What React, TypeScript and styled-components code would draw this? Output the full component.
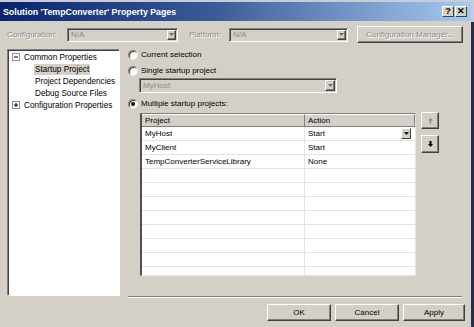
import { Fragment } from "react";
import styled, { createGlobalStyle } from "styled-components";

const GlobalStyle = createGlobalStyle`
  html, body {
    margin: 0;
    padding: 0;
    background: #22304c;
  }
  body {
    font-family: "Liberation Sans", Arial, sans-serif;
    font-size: 8px;
    color: #000;
  }
  * {
    box-sizing: border-box;
  }
`;

const Screen = styled.div`
  width: 474px;
  height: 327px;
  display: flex;
  overflow: hidden;
`;

const Backdrop = styled.div`
  width: 3px;
  background: linear-gradient(to bottom, #c8ccd8 22px, #22304c 22px);
`;

const Window = styled.div`
  width: 471px;
  height: 327px;
  background: #d4d0c8;
  border-top: 2px solid #c8ccd8;
  display: flex;
  flex-direction: column;
`;

const TitleBar = styled.div`
  height: 19px;
  display: flex;
  align-items: center;
  padding: 0 4px 0 3px;
  background: linear-gradient(to right, #0a246a, #3a5a98 45%, #a6caf0);
  color: #fff;
  font-weight: bold;
  font-size: 8.8px;
`;

const TitleText = styled.div`
  flex: 1;
`;

const CaptionButton = styled.div`
  width: 12px;
  height: 11px;
  margin-left: 1px;
  background: #d4d0c8;
  border: 1px solid;
  border-color: #fff #404040 #404040 #fff;
  color: #000;
  font-size: 9px;
  font-weight: bold;
  display: flex;
  align-items: center;
  justify-content: center;
  line-height: 1;
`;

const ConfigRow = styled.div`
  display: flex;
  align-items: center;
  height: 17px;
  margin-top: 5px;
  padding-left: 7px;
`;

const DisabledLabel = styled.div<{ $width: number; $gap?: number }>`
  width: ${({ $width }) => $width}px;
  margin-left: ${({ $gap = 0 }) => $gap}px;
  color: #8c8c8c;
  text-shadow: 1px 1px 0 #fff;
`;

const Combo = styled.div<{ $width: number; $height?: number }>`
  width: ${({ $width }) => $width}px;
  height: ${({ $height = 14 }) => $height}px;
  display: flex;
  align-items: stretch;
  background: #d4d0c8;
  border: 1px solid;
  border-color: #808080 #fff #fff #808080;
  box-shadow: inset 1px 1px 0 #404040;
  padding: 1px;
`;

const ComboText = styled.div`
  flex: 1;
  padding-left: 2px;
  display: flex;
  align-items: center;
  color: #8c8c8c;
`;

const ArrowButton = styled.div<{ $width?: number }>`
  width: ${({ $width = 9 }) => $width}px;
  background: #d4d0c8;
  border: 1px solid;
  border-color: #fff #404040 #404040 #fff;
  box-shadow: inset -1px -1px 0 #808080;
  display: flex;
  align-items: center;
  justify-content: center;
`;

const PushButton = styled.div<{ $width: number; $height?: number; $disabled?: boolean; $gap?: number }>`
  width: ${({ $width }) => $width}px;
  height: ${({ $height = 17 }) => $height}px;
  margin-left: ${({ $gap = 0 }) => $gap}px;
  background: #d4d0c8;
  border: 1px solid;
  border-color: #fff #404040 #404040 #fff;
  box-shadow: inset -1px -1px 0 #808080;
  display: flex;
  align-items: center;
  justify-content: center;
  color: ${({ $disabled }) => ($disabled ? "#8c8c8c" : "#000")};
  text-shadow: ${({ $disabled }) => ($disabled ? "1px 1px 0 #fff" : "none")};
`;

const Main = styled.div`
  display: flex;
  align-items: flex-start;
  gap: 8px;
  margin-top: 6px;
  padding-left: 7px;
`;

const Tree = styled.div`
  width: 113px;
  height: 247px;
  background: #fff;
  border: 1px solid;
  border-color: #808080 #fff #fff #808080;
  box-shadow: inset 1px 1px 0 #404040;
  padding-top: 1px;
  font-size: 8.2px;
`;

const TreeItem = styled.div<{ $level: number }>`
  height: 12px;
  display: flex;
  align-items: center;
  padding-left: ${({ $level }) => ($level === 0 ? 4 : 26)}px;
`;

const Expander = styled.svg`
  width: 8px;
  height: 8px;
  margin-right: 3px;
`;

const TreeLabel = styled.span<{ $selected?: boolean }>`
  padding: 1px 1px;
  background: ${({ $selected }) => ($selected ? "#d4d0c8" : "transparent")};
`;

const RightColumn = styled.div`
  width: 334px;
  height: 249px;
  display: flex;
  flex-direction: column;
`;

const RadioRow = styled.div<{ $top: number }>`
  height: 11px;
  margin-top: ${({ $top }) => $top}px;
  display: flex;
  align-items: center;
  gap: 3px;
`;

const Radio = styled.span<{ $checked?: boolean }>`
  width: 10px;
  height: 10px;
  border-radius: 50%;
  background: #fff;
  border: 1px solid;
  border-color: #808080 #e8e8e8 #e8e8e8 #808080;
  box-shadow: inset 1px 1px 0 #404040;
  display: flex;
  align-items: center;
  justify-content: center;

  &::after {
    content: "";
    width: 4px;
    height: 4px;
    border-radius: 50%;
    background: ${({ $checked }) => ($checked ? "#000" : "transparent")};
  }
`;

const Indented = styled.div`
  margin: 2px 0 0 11px;
`;

const GridArea = styled.div`
  display: flex;
  align-items: flex-start;
  gap: 5px;
  margin: 4px 0 0 12px;
`;

const Grid = styled.div`
  width: 276px;
  height: 163px;
  background: #fff;
  overflow: hidden;
  border-top: 1px solid #808080;
  border-left: 2px solid #505050;
  border-right: 1px solid #e4e4e4;
  border-bottom: 1px solid #e4e4e4;
  display: grid;
  grid-template-columns: 163px 1fr;
  grid-auto-rows: 14px;
  grid-template-rows: 13px;
  align-content: start;
`;

const HeaderCell = styled.div`
  background: #d4d0c8;
  border-top: 1px solid #fff;
  border-right: 1px solid #808080;
  border-bottom: 1px solid #808080;
  padding-left: 3px;
  display: flex;
  align-items: center;
`;

const Cell = styled.div<{ $divider?: boolean }>`
  border-bottom: 1px solid #e2e2e2;
  border-right: ${({ $divider }) => ($divider ? "1px solid #e2e2e2" : "none")};
  padding: 0 4px 0 3px;
  display: flex;
  align-items: center;
  justify-content: space-between;
`;

const CellArrow = styled.div`
  width: 10px;
  height: 11px;
  background: #d4d0c8;
  border: 1px solid;
  border-color: #fff #404040 #404040 #fff;
  display: flex;
  align-items: center;
  justify-content: center;
`;

const SideButtons = styled.div`
  display: flex;
  flex-direction: column;
  gap: 6px;
  margin-top: -1px;
`;

const Separator = styled.div`
  margin-top: auto;
  height: 2px;
  border-top: 1px solid #808080;
  border-bottom: 1px solid #fff;
`;

const ButtonRow = styled.div`
  display: flex;
  justify-content: flex-end;
  gap: 4px;
  margin-top: 6px;
  padding-right: 6px;
`;

function DownTriangle({ color = "#000" }: { color?: string }) {
  return (
    <svg width="5" height="3" viewBox="0 0 5 3">
      <path d="M0 0h5L2.5 3z" fill={color} />
    </svg>
  );
}

function Arrow({ up, color }: { up?: boolean; color: string }) {
  return (
    <svg width="5" height="6" viewBox="0 0 5 6">
      {up ? (
        <path d="M2.5 0L5 2.5H3.2V6H1.8V2.5H0z" fill={color} />
      ) : (
        <path d="M1.5 0h2v3H5L2.5 6 0 3h1.5z" fill={color} />
      )}
    </svg>
  );
}

function ExpandBox({ open }: { open: boolean }) {
  return (
    <Expander viewBox="0 0 8 8">
      <rect x="0.5" y="0.5" width="7" height="7" fill="#fff" stroke="#909090" />
      <path d="M2 4h4" stroke="#000" />
      {!open && <path d="M4 2v4" stroke="#000" />}
    </Expander>
  );
}

const rows = [
  { project: "MyHost", action: "Start", active: true },
  { project: "MyClient", action: "Start" },
  { project: "TempConverterServiceLibrary", action: "None" },
];

export default function App() {
  const filler = Array.from({ length: 8 }, (_, i) => i);

  return (
    <Screen>
      <GlobalStyle />
      <Window>
        <TitleBar>
          <TitleText>Solution 'TempConverter' Property Pages</TitleText>
          <CaptionButton>?</CaptionButton>
          <CaptionButton>✕</CaptionButton>
        </TitleBar>

        <ConfigRow>
          <DisabledLabel $width={60}>Configuration:</DisabledLabel>
          <Combo $width={111}>
            <ComboText>N/A</ComboText>
            <ArrowButton>
              <DownTriangle color="#707070" />
            </ArrowButton>
          </Combo>
          <DisabledLabel $width={40} $gap={11}>Platform:</DisabledLabel>
          <Combo $width={119}>
            <ComboText>N/A</ComboText>
            <ArrowButton>
              <DownTriangle color="#707070" />
            </ArrowButton>
          </Combo>
          <PushButton $width={106} $disabled $gap={9}>
            Configuration Manager...
          </PushButton>
        </ConfigRow>

        <Main>
          <Tree>
            <TreeItem $level={0}>
              <ExpandBox open />
              <TreeLabel>Common Properties</TreeLabel>
            </TreeItem>
            <TreeItem $level={1}>
              <TreeLabel $selected>Startup Project</TreeLabel>
            </TreeItem>
            <TreeItem $level={1}>
              <TreeLabel>Project Dependencies</TreeLabel>
            </TreeItem>
            <TreeItem $level={1}>
              <TreeLabel>Debug Source Files</TreeLabel>
            </TreeItem>
            <TreeItem $level={0}>
              <ExpandBox open={false} />
              <TreeLabel>Configuration Properties</TreeLabel>
            </TreeItem>
          </Tree>

          <RightColumn>
            <RadioRow $top={0}>
              <Radio />
              <span>Current selection</span>
            </RadioRow>
            <RadioRow $top={5}>
              <Radio />
              <span>Single startup project</span>
            </RadioRow>
            <Indented>
              <Combo $width={198} $height={15}>
                <ComboText>MyHost</ComboText>
                <ArrowButton $width={10}>
                  <DownTriangle color="#707070" />
                </ArrowButton>
              </Combo>
            </Indented>
            <RadioRow $top={5}>
              <Radio $checked />
              <span>Multiple startup projects:</span>
            </RadioRow>

            <GridArea>
              <Grid>
                <HeaderCell>Project</HeaderCell>
                <HeaderCell>Action</HeaderCell>
                {rows.map((row) => (
                  <Fragment key={row.project}>
                    <Cell $divider>{row.project}</Cell>
                    <Cell>
                      {row.action}
                      {row.active && (
                        <CellArrow>
                          <DownTriangle />
                        </CellArrow>
                      )}
                    </Cell>
                  </Fragment>
                ))}
                {filler.map((i) => (
                  <Fragment key={i}>
                    <Cell $divider />
                    <Cell />
                  </Fragment>
                ))}
              </Grid>
              <SideButtons>
                <PushButton $width={18} $height={17}>
                  <Arrow up color="#8a8a8a" />
                </PushButton>
                <PushButton $width={18} $height={18}>
                  <Arrow color="#000" />
                </PushButton>
              </SideButtons>
            </GridArea>

            <Separator />
          </RightColumn>
        </Main>

        <ButtonRow>
          <PushButton $width={64}>OK</PushButton>
          <PushButton $width={64}>Cancel</PushButton>
          <PushButton $width={62}>Apply</PushButton>
        </ButtonRow>
      </Window>
      <Backdrop />
    </Screen>
  );
}
